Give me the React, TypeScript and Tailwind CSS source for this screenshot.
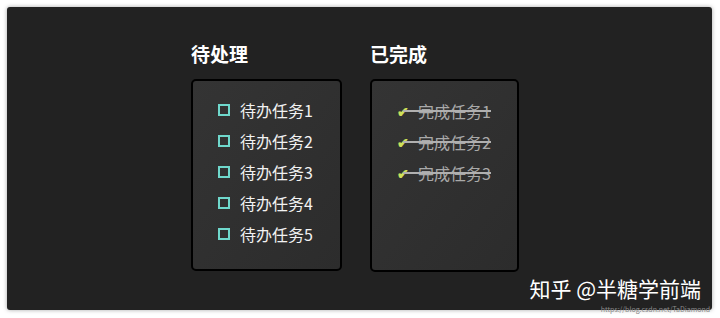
import React from 'react';

const todos = ['待办任务1', '待办任务2', '待办任务3', '待办任务4', '待办任务5'];
const done = ['完成任务1', '完成任务2', '完成任务3'];

const font = { fontFamily: '"Noto Sans CJK SC", "Noto Sans", sans-serif' };

const App: React.FC = () => {
  return (
    <div className="w-[720px] h-[318px] bg-white p-[7px] pr-[8px] pb-[8px]" style={font}>
      <div className="relative h-full w-full rounded-[3px] bg-[#222222] shadow-[0_0_4px_rgba(0,0,0,0.35)]">
        <div className="flex gap-[28px] pl-[184px] pt-[33px]">
          {/* pending column */}
          <div className="flex flex-col">
            <h2 className="h-[39px] text-[19px] font-bold leading-[28px] text-white">待处理</h2>
            <div className="flex h-[192px] w-[151px] flex-col gap-[7px] rounded-[5px] border-2 border-black bg-gradient-to-br from-[#343434] to-[#2c2c2c] pl-[25px] pt-[17px]">
              {todos.map(t => (
                <div key={t} className="flex h-[24px] items-center gap-[10px]">
                  <span className="h-[12px] w-[12px] border-2 border-[#6fd8cc]" />
                  <span className="text-[16px] leading-[24px] text-[#f2f2f2]">{t}</span>
                </div>
              ))}
            </div>
          </div>

          {/* done column */}
          <div className="flex flex-col">
            <h2 className="h-[39px] text-[19px] font-bold leading-[28px] text-white">已完成</h2>
            <div className="flex h-[193px] w-[149px] flex-col gap-[6px] rounded-[5px] border-2 border-black bg-gradient-to-br from-[#343434] to-[#2c2c2c] pl-[25px] pt-[17px]">
              {done.map(t => (
                <div key={t} className="relative flex h-[25px] items-center gap-[9px]">
                  <span className="text-[14px] font-bold leading-none text-[#cde05a]">✔</span>
                  <span className="text-[16px] leading-[24px] text-[#a9a9a9]">{t}</span>
                  <span className="absolute left-[6px] top-[12px] h-[1.5px] w-[88px] bg-[#b0b0b0]" />
                </div>
              ))}
            </div>
          </div>
        </div>

        {/* watermark */}
        <div className="absolute bottom-[11px] right-[11px] text-[21px] leading-none text-white">
          知乎 @半糖学前端
        </div>
        <div className="absolute bottom-[-3px] right-[2px] text-[7px] leading-none text-[#8a8a8a]">
          https://blog.csdn.net/TaDiamond
        </div>
      </div>
    </div>
  );
};

export default App;
